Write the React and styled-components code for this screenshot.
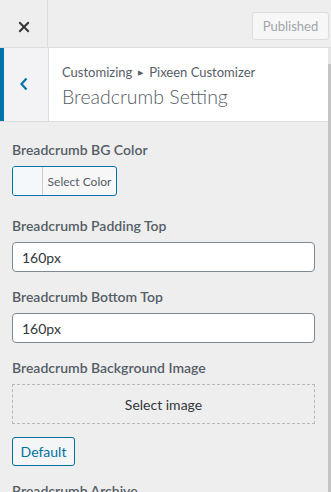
import React from "react";
import styled, { createGlobalStyle } from "styled-components";

const Global = createGlobalStyle`
  html, body { margin: 0; padding: 0; background: #eeeeee; }
  body { font-family: Lato, "Noto Sans", sans-serif; color: #555d66; overflow: hidden; }
  * { box-sizing: border-box; }
`;

const Shell = styled.div`
  width: 331px;
  height: 492px;
  display: flex;
  flex-direction: column;
  background: #eeeeee;
  overflow: hidden;
`;

const TopBar = styled.div`
  height: 48px;
  flex: 0 0 48px;
  display: flex;
  align-items: center;
  border-bottom: 1px solid #dddddd;
  background: #eeeeee;
`;

const CloseButton = styled.div`
  width: 48px;
  height: 47px;
  display: flex;
  align-items: center;
  justify-content: center;
  border-right: 1px solid #dddddd;
  padding-top: 6px;
`;

const Spacer = styled.div`
  flex: 1;
`;

const PublishedButton = styled.div`
  width: 77px;
  height: 28px;
  margin-right: 2px;
  margin-top: 4px;
  border: 1px solid #dddddd;
  border-radius: 3px;
  background: #f7f7f7;
  color: #a0a5aa;
  font-size: 13px;
  display: flex;
  align-items: center;
  justify-content: center;
`;

const Body = styled.div`
  flex: 1;
  display: flex;
  min-height: 0;
`;

const Main = styled.div`
  flex: 1;
  display: flex;
  flex-direction: column;
  min-width: 0;
`;

const Track = styled.div`
  width: 3px;
  flex: 0 0 3px;
  background: #e6e6e6;
  display: flex;
  flex-direction: column;
`;

const Thumb = styled.div`
  margin-top: 16px;
  flex: 1;
  background: #c4c4c4;
`;

const SectionHeader = styled.div`
  height: 74px;
  flex: 0 0 74px;
  display: flex;
  border-bottom: 1px solid #dddddd;
  background: #ffffff;
`;

const BackButton = styled.div`
  width: 49px;
  flex: 0 0 49px;
  border-left: 4px solid #0073aa;
  border-right: 1px solid #dddddd;
  background: #f3f3f5;
  display: flex;
  align-items: center;
  justify-content: center;
  padding-right: 4px;
  padding-bottom: 2px;
`;

const TitleBlock = styled.div`
  flex: 1;
  padding: 14px 0 0 13px;
  display: flex;
  flex-direction: column;
`;

const Crumb = styled.div`
  font-size: 13px;
  line-height: 20px;
  color: #555d66;
  display: flex;
  align-items: center;
  gap: 6px;
`;

const Arrow = styled.span`
  font-size: 7px;
  color: #555d66;
`;

const Title = styled.div`
  font-size: 19.5px;
  font-weight: 300;
  line-height: 28px;
  margin-top: 1px;
  color: #555d66;
`;

const Content = styled.div`
  padding: 17px 13px 0 12px;
  display: flex;
  flex-direction: column;
`;

const Field = styled.div`
  display: flex;
  flex-direction: column;
  margin-bottom: ${(p) => p.$gap || 14}px;
`;

const Label = styled.div`
  font-size: 14px;
  font-weight: 600;
  line-height: 22px;
  color: #555d66;
  margin-bottom: 5px;
`;

const ColorButton = styled.div`
  width: 105px;
  height: 30px;
  display: flex;
  border: 1px solid #0073aa;
  border-radius: 3px;
  overflow: hidden;
  background: #f7f7f7;
`;

const Swatch = styled.div`
  width: 30px;
  background: #f4f8fa;
  border-right: 1px solid #cccccc;
`;

const ColorText = styled.div`
  flex: 1;
  display: flex;
  align-items: center;
  justify-content: center;
  font-size: 12px;
  color: #555d66;
`;

const TextInput = styled.div`
  height: 30px;
  border: 1px solid #7e8993;
  border-radius: 4px;
  background: #ffffff;
  display: flex;
  align-items: center;
  padding-left: 9px;
  font-size: 14px;
  color: #32373c;
`;

const ImagePlaceholder = styled.div`
  height: 40px;
  border: 1px dashed #b4b9be;
  display: flex;
  align-items: center;
  justify-content: center;
  font-size: 14px;
  color: #32373c;
`;

const DefaultButton = styled.div`
  width: 63px;
  height: 29px;
  margin-top: 13px;
  border: 1px solid #0071a1;
  border-radius: 3px;
  background: #f3f5f6;
  color: #0071a1;
  font-size: 14px;
  display: flex;
  align-items: center;
  justify-content: center;
`;

export default function App() {
  return (
    <>
      <Global />
      <Shell>
        <TopBar>
          <CloseButton>
            <svg width="12" height="12" viewBox="0 0 12 12">
              <path d="M2 2 L10 10 M10 2 L2 10" stroke="#333" strokeWidth="2" strokeLinecap="square" fill="none" />
            </svg>
          </CloseButton>
          <Spacer />
          <PublishedButton>Published</PublishedButton>
        </TopBar>
        <Body>
          <Main>
            <SectionHeader>
              <BackButton>
                <svg width="10" height="14" viewBox="0 0 10 14">
                  <path d="M7.5 1.5 L2.5 7 L7.5 12.5" stroke="#0073aa" strokeWidth="2.2" fill="none" />
                </svg>
              </BackButton>
              <TitleBlock>
                <Crumb>
                  <span>Customizing</span>
                  <Arrow>▶</Arrow>
                  <span>Pixeen Customizer</span>
                </Crumb>
                <Title>Breadcrumb Setting</Title>
              </TitleBlock>
            </SectionHeader>
            <Content>
              <Field $gap={19}>
                <Label>Breadcrumb BG Color</Label>
                <ColorButton>
                  <Swatch />
                  <ColorText>Select Color</ColorText>
                </ColorButton>
              </Field>
              <Field>
                <Label>Breadcrumb Padding Top</Label>
                <TextInput>160px</TextInput>
              </Field>
              <Field>
                <Label>Breadcrumb Bottom Top</Label>
                <TextInput>160px</TextInput>
              </Field>
              <Field>
                <Label>Breadcrumb Background Image</Label>
                <ImagePlaceholder>Select image</ImagePlaceholder>
                <DefaultButton>Default</DefaultButton>
              </Field>
              <Field>
                <Label>Breadcrumb Archive</Label>
              </Field>
            </Content>
          </Main>
          <Track>
            <Thumb />
          </Track>
        </Body>
      </Shell>
    </>
  );
}
